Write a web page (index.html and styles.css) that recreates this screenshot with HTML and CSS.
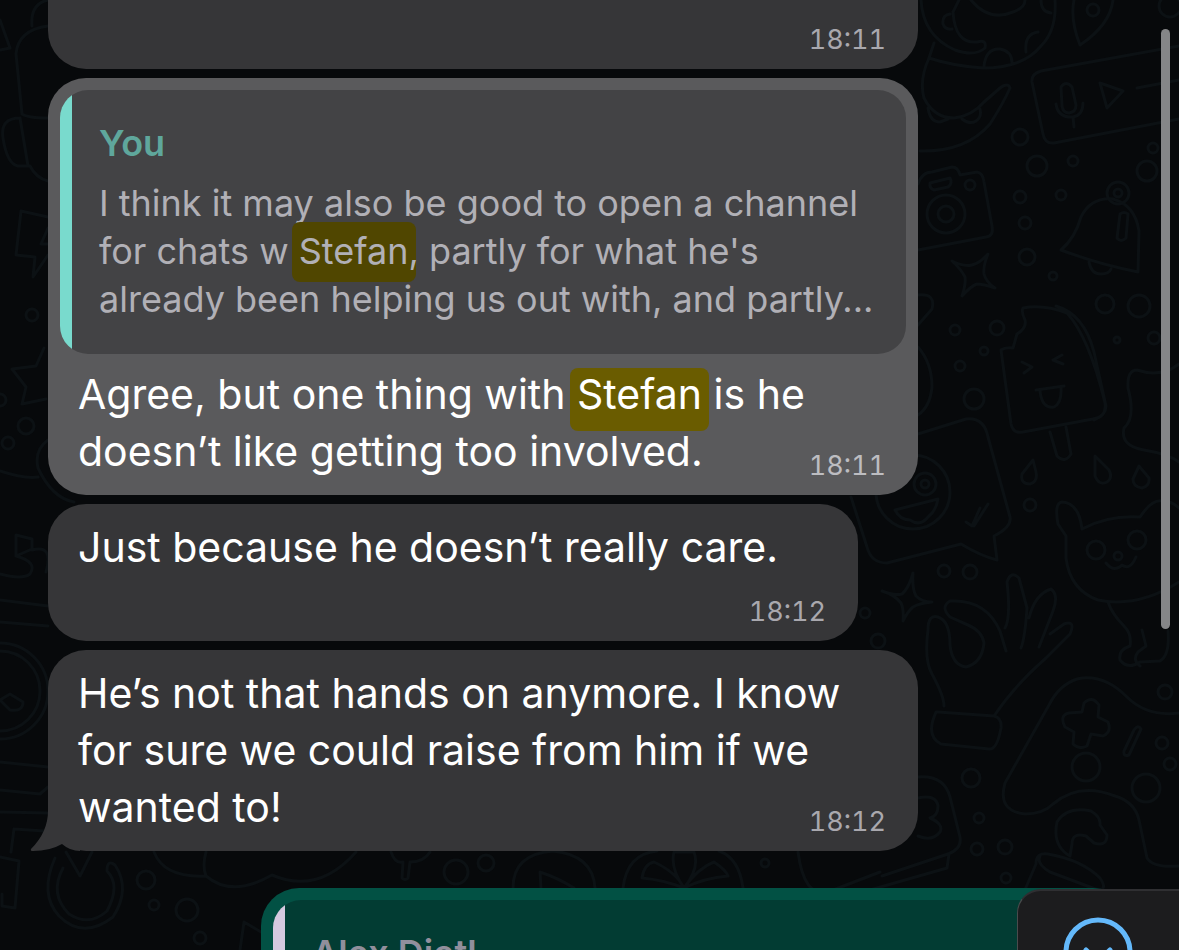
FILE: index.html
```html
<!DOCTYPE html>
<html lang="en">
<head>
    <meta charset="UTF-8">
    <meta name="viewport" content="width=device-width, initial-scale=1">
    <title>Chat</title>
    <link rel="stylesheet" href="styles.css">
</head>
<body>
<svg class="wallpaper" viewBox="0 0 1179 950" preserveAspectRatio="xMinYMin slice" aria-hidden="true">
    <!-- dinosaur -->
    <path d="M921 0q2 36 34 50q20 7 30-2q2-9-8-6q-22 2-24-30l6-12M971 0q18 22 42 12q12-4 12-12M1055 0q2 30-14 46q-18 22-58 22q-30-2-54-10l5-15M929 58q-10 22-5 40q10 20 30 20q18-2 30-16l16-14q8-6 10 0q-6 14-20 36q-24 28-70 27M984 66q2-18 16-17q12 2 12 14M1026 52q-2-18 12-20M1041 0q0 12 10 13M950 14q-8 1-7 10q2 6 9 5M928 108q2 14 12 14l8-3M962 119q8 6 14 2q6-4 4-12"/>
    <!-- map pin, voice note -->
    <path d="M1074 0q-4 20 6 45q30-20 33-45"/><circle cx="1093" cy="10" r="6"/><circle cx="1170" cy="6" r="11"/>
    <path d="M1179 46l-138 25q-10 3-9 11l11 52q2 10 11 9l125-24M1061 87q5-7 11 0l4 18q0 7-7 8q-6 0-7-7zM1056 104q2 14 17 13q10-2 10-14M1073 117l1 10M1100 83l23 8l-16 17zM1137 88l42-8"/>
    <!-- camera -->
    <path d="M918 184q4-12 14-12l20-5q6 0 8 8l17-3q6 1 7 10l8 44q2 10-6 11l-68 13M930 183l20-5q3 5-2 9l-14 3q-5-2-4-7z"/>
    <circle cx="946" cy="214" r="19"/><circle cx="946" cy="214" r="8"/><circle cx="970" cy="185" r="5"/>
    <!-- bell -->
    <path d="M1061 250q14-12 20-33q10-20 32-18q22 6 26 32l-1 41q-40-8-77-22zM1120 214q4-3 8 0l-2 24q-5 5-9 0zM1089 262q2 12 12 12q8 0 10-5"/><circle cx="1118" cy="193" r="11"/><circle cx="1118" cy="193" r="4"/>
    <!-- sparkles -->
    <path d="M952 261q12 6 20 4q8-2 16-11q-5 12-4 20q2 8 11 14q-12-4-18-4q-6 2-15 12q4-12 3-19q-4-8-13-16zM882 591q12 5 20 3q7-6 11-21q-1 16 3 23q6 6 16 6q-12 1-19 5q-5 4-10 14q1-12-2-18q-6-8-19-12z"/>
    <!-- ice lolly -->
    <path d="M1023 308q20-4 44 5q22 24 38 90q2 14-12 16l-70 13q-10 2-12-8l-10-74q4-3 12-2l4-14q10-6 8-14q-4-8-2-12M1056 306q28 8 38 46l12 54q0 9-12 14M1050 432l7 24q8 8 14-2l-5-27M1022 362l10 5l-8 6M1062 355l-9 5l10 4M1036 390l28-4M1040 391q2 18 14 16q8-4 7-20M918 295q18-2 14 14l-14 16M918 347q14 16 14 40q-2 20-14 28"/>
    <!-- smiling sticker -->
    <path d="M918 434l48-15q18-2 22 18l22 80q2 10-16 19l3 24q-16-4-36-16l-74 19q-16 0-20-16l-16-50M895 510l43-11q-2 12-10 18q-8 10-18 3q-10 0-15-10M966 522l6 4l8-18M974 526l14-22"/><circle cx="913" cy="492" r="37"/><circle cx="925" cy="484" r="11"/><circle cx="925" cy="484" r="4"/>
    <path d="M1033 460l-11 14q-2 10 8 10q8-2 6-12zM1095 456v20q4 10 12 6q6-4 2-12zM1139 466l-6 13q0 8 9 9q8-2 7-10zM1179 364q-18 14-42 6q-10 0-9 18q8 30-4 40q-4 18 20 22q24 4 35 12"/>
    <!-- cat -->
    <path d="M1082 529q-3-26-20-27q-8 1-4 22l8 12v22q4 32 32 42q40 8 81-18M1082 529q26-14 58-12q12-18 22-16q10 0 17 7M1106 563q8 10 16 2q8 6 14-8M1108 602q4 12 16 24q8 8 6 20q-12 4-10 14q8 10 20 2l20-1q10-6 8-30M1142 630l4 16l-8 6q-6 8 2 14"/><circle cx="1096" cy="550" r="9"/><circle cx="1137" cy="540" r="9"/><circle cx="1118" cy="556" r="4"/>
    <!-- hand -->
    <path d="M944 706q0-10-12-32q-8-14-4-44q0-16 10-13q12 4 12 28q2 20 16 22q16-4 18-24q-2-12-16-18l-18-8q-10-10 0-16q36-2 50 30l6 20M1005 628q6-10 2-46q4-12 12-4l8 30q-2 30-6 40M1029 618q6-24 22-29q8 6 2 22l-14 36M1050 634l14-10q12-4 6 10l-24 24q-32 28-52 58M938 712l56 4q8 2 7 12q-4 22-12 21l-48-5q-16-8-5-32z"/>
    <!-- gamepad -->
    <path d="M1179 713q-32 4-52-16q-24-24-50-18q-18 6-28 26l-44 78q-8 28 20 31q18 0 28-10q26-22 62-8q20 6 24 24l8 38q6 10 32 8M1082 712l2-9q8-8 15 2l-1 12l10 5q4 10-5 14l-12-2l-4 12q-8 4-14-2l1-12l-9-5q-6-12 4-14zM1134 730q4-6 7-1l-12 26q-6 2-5-4zM1070 856q-18-10-13-34q10-16 34-11q10 6 9 14l7 10q0 12-13 8l-8-7q-14-4-14 8z"/><circle cx="1086" cy="767" r="14"/><circle cx="1146" cy="788" r="14"/>
    <!-- bottom strip -->
    <path d="M918 777q26-2 32 20l10 40q2 12-12 17l-66 22M849 896l98-28l2-14M918 798q18-4 20 8q0 10-8 12q14 6 10 14q-8 10-22 4M1024 892l12-28q0-12 12-10q34 6 52 24q8 12-2 12l-48-18q-14-8-10-16M798 852q6 46 30 40l52-20M154 852q10 26 52 24q-4-10 0-24M206 876q26 22 66-1q46 20 84-23M391 852q4 12 12 10l-1 16q3 3 6 0l2-16q14 0 20-10M513 888q0-34 40-37q40 4 42 37M541 888l-1-16q18 6 34 16M623 888q4-34 34-37M743 888q-4-30-24-37M684 888q-20-8-42-10q2-14 12-16q22 10 30 26M684 888q-14-20-10-36h20q6 16-10 36M684 888q14-20 30-26q12 8 14 14q-24 2-44 12"/>
    <!-- left edge -->
    <path d="M0 20l10 28L0 50M48 26q-30 4-32 28l6 60q6 4 26 4M20 118q-20 0-17 20q4 26 15 28h12q6 12 18 15M20 118l8 48M48 0q-18 4-16 26M21 211l27 6M21 211l-5 44l19 2l-2 20l15-22M48 228l-7 16h7M44 348l-8 18l-24 3l14 18l-4 17l24-5M0 471q24 8 38 6M48 440q-14 10-10 28q14 30 36 34M16 535l16 4v10l-16 7zM16 556q22 6 14 18q-8 6-30 0M32 550q22-6 14 22M0 600l48 6M0 622l48 4M0 762l48 5M0 790l40 4l8-7M0 812l48 1M14 829l30 2M11 852l3-23M0 857l19 4l-4 47l-13-2v-12M240 950l4-28l17 10"/>
    <circle cx="0" cy="691" r="48"/><circle cx="0" cy="691" r="40"/><path d="M0 700l10-6l13 8q0 10-13 8z"/>
    <path d="M66 852l14 24l12-24M55 858q-16 36 4 58q24 24 54 1q18-28 2-52q-8-6-8 6q14 14 0 40q-18 16-38 3q-20-20-6-46"/>
    <circle cx="146" cy="880" r="9"/><circle cx="154" cy="905" r="5"/><circle cx="187" cy="910" r="11"/><circle cx="200" cy="938" r="6"/>
    <circle cx="456" cy="872" r="12"/><circle cx="486" cy="863" r="8"/><circle cx="765" cy="863" r="4"/>
    <circle cx="32" cy="315" r="6"/><circle cx="26" cy="426" r="8"/><circle cx="8" cy="443" r="6"/><circle cx="0" cy="400" r="6"/>
    <circle cx="1020" cy="137" r="8"/><circle cx="1037" cy="166" r="10"/><circle cx="1073" cy="161" r="5"/><circle cx="1020" cy="197" r="6"/><circle cx="1061" cy="195" r="5"/><circle cx="1025" cy="223" r="6"/><circle cx="1027" cy="257" r="8"/><circle cx="1053" cy="276" r="4"/><circle cx="1147" cy="171" r="10"/><circle cx="1153" cy="148" r="5"/>
    <circle cx="1105" cy="304" r="9"/><circle cx="1139" cy="306" r="11"/><circle cx="1154" cy="338" r="6"/><circle cx="1117" cy="340" r="3"/><circle cx="955" cy="330" r="5"/><circle cx="997" cy="328" r="7"/><circle cx="984" cy="351" r="4"/><circle cx="960" cy="366" r="5"/><circle cx="974" cy="399" r="10"/>
    <circle cx="1030" cy="505" r="6"/><circle cx="944" cy="571" r="6"/><circle cx="970" cy="572" r="7"/><circle cx="878" cy="641" r="7"/><circle cx="865" cy="613" r="5"/><circle cx="1165" cy="692" r="7"/><circle cx="1162" cy="743" r="6"/><circle cx="1170" cy="764" r="6"/><circle cx="971" cy="778" r="9"/><circle cx="979" cy="818" r="5"/><circle cx="977" cy="849" r="6"/><circle cx="1005" cy="847" r="7"/><circle cx="1006" cy="878" r="5"/>
</svg>

<main class="chat">
    <article class="message">
        <time class="time" datetime="18:11">18:11</time>
    </article>

    <article class="message selected">
        <blockquote class="quote">
            <cite class="author">You</cite>
            <p>I think it may also be good to open a channel<br>for chats w <mark>Stefan</mark>, partly for what he's<br>already been helping us out with, and partly...</p>
        </blockquote>
        <div class="body">
            <p class="text">Agree, but one thing with <mark>Stefan</mark> is he<br>doesn’t like getting too involved.</p>
            <time class="time" datetime="18:11">18:11</time>
        </div>
    </article>

    <article class="message short">
        <p class="text">Just because he doesn’t really care.</p>
        <time class="time" datetime="18:12">18:12</time>
    </article>

    <article class="message">
        <svg class="tail" viewBox="0 0 50 40" aria-hidden="true">
            <path d="M18 0Q18 21 1 38Q0 40 3 40Q20 40 32 33Q40 40 50 40V0z"/>
        </svg>
        <div class="body">
            <p class="text">He’s not that hands on anymore. I know<br>for sure we could raise from him if we<br>wanted to!</p>
            <time class="time" datetime="18:12">18:12</time>
        </div>
    </article>

    <article class="message sent">
        <blockquote class="quote">
            <cite class="author">Alex Dietl</cite>
        </blockquote>
    </article>
</main>

<div class="scrollbar"></div>

<div class="panel">
    <button type="button" class="scroll-down" aria-label="Scroll to latest">
        <svg viewBox="0 0 70 70" aria-hidden="true">
            <circle cx="35" cy="35" r="32"/>
            <path d="M23 33l12 12l12-12"/>
        </svg>
    </button>
</div>
</body>
</html>
```

FILE: styles.css
```css
* {
    box-sizing: border-box;
}
body {
    position: relative;
    height: 100vh;
    margin: 0;
    overflow: hidden;
    background: #07090b;
    color: #fff;
    font-family: Inter, "Liberation Sans", sans-serif;
}
p {
    margin: 0;
}

.wallpaper {
    position: absolute;
    top: 0;
    left: 0;
    width: 100%;
    height: 100%;
    fill: none;
    stroke: #0c1114;
    stroke-width: 3;
    stroke-linejoin: round;
    stroke-linecap: round;
}

.chat {
    position: relative;
    display: flex;
    flex-direction: column;
    align-items: flex-start;
    gap: 9px;
    height: 100%;
    padding: 0 48px;
    overflow: hidden;
}

.message {
    position: relative;
    display: flex;
    flex: none;
    flex-direction: column;
    width: 100%;
    max-width: 870px;
    padding: 15px 12px 13px;
    border-radius: 38px;
    background: #363638;
}
.message:first-child {
    padding-top: 24px;
    border-radius: 0 0 38px 38px;
}
.message.selected {
    padding-top: 12px;
    background: #5a5a5c;
}
.message.short {
    max-width: 810px;
}
.message.sent {
    align-self: flex-end;
    margin-top: 28px;
    padding-top: 12px;
    background: #025144;
}

/* time shares the last line of the text */
.body {
    display: grid;
}
.body > * {
    grid-area: 1 / 1;
}
.text {
    padding: 0 18px 2px;
    font-size: 41px;
    line-height: 57px;
}
.time {
    align-self: end;
    justify-self: end;
    padding-right: 20px;
    color: #a9a8ae;
    font-size: 27px;
    font-variant-numeric: tabular-nums;
    line-height: 32px;
}
.selected .time {
    color: #bdbdc1;
}
.short .time {
    margin-top: 18px;
}

.quote {
    margin: 0 0 12px;
    padding: 29px 28px 31px 39px;
    border-radius: 28px;
    background: linear-gradient(to right, #79dacd 12px, #434345 12px);
    color: #b1b0b6;
    font-size: 36px;
    line-height: 48px;
}
.author {
    display: block;
    margin-bottom: 12px;
    color: #5fa79c;
    font-style: normal;
    font-weight: 600;
}
.sent .quote {
    background: linear-gradient(to right, #d5c9df 12px, #023c33 12px);
}
.sent .author {
    color: #918f9c;
}

mark {
    margin: 0 -7px;
    padding: 1px 7px 12px;
    border-radius: 8px;
    background: #6a5c00;
    color: inherit;
}
.quote mark {
    padding: 7px 7px 9px;
    background: #504600;
}

.tail {
    position: absolute;
    bottom: 0;
    left: -18px;
    width: 50px;
    height: 40px;
    fill: #363638;
}

.scrollbar {
    position: absolute;
    top: 29px;
    right: 9px;
    width: 9px;
    height: 600px;
    border-radius: 5px;
    background: #858688;
}

.panel {
    position: absolute;
    right: 0;
    bottom: 0;
    width: 162px;
    height: 61px;
    padding: 26px 0 0 45px;
    overflow: hidden;
    border-top: 2px solid #2f2f32;
    border-left: 1px solid #4a4b4d;
    border-top-left-radius: 24px;
    background: #1c1c1e;
}
.scroll-down {
    display: block;
    width: 70px;
    height: 70px;
    padding: 0;
    border: 0;
    background: none;
}
.scroll-down svg {
    display: block;
    fill: none;
    stroke: #64b9fb;
    stroke-width: 5;
    stroke-linecap: round;
    stroke-linejoin: round;
}
```
